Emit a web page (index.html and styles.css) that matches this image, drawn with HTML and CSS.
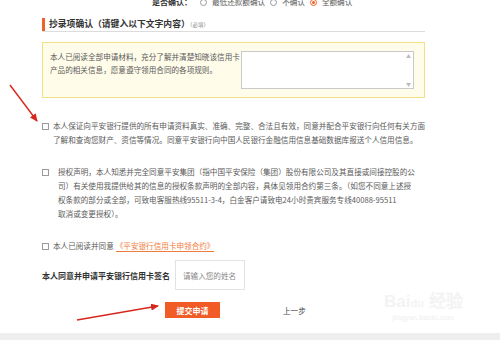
FILE: index.html
```html
<!DOCTYPE html>
<html lang="zh-CN">
<head>
<meta charset="utf-8">
<title>抄录项确认</title>
<link rel="stylesheet" href="styles.css">
</head>
<body>
<div class="page">
  <div class="confirm-row">
    <span class="confirm-label">是否确认：</span>
    <label class="radio"><span class="dot"></span>最低还款额确认</label>
    <label class="radio"><span class="dot"></span>不确认</label>
    <label class="radio"><span class="dot on"></span>全额确认</label>
  </div>

  <div class="section-head">
    <h2 class="section-title">抄录项确认（请键入以下文字内容）<small>（必填）</small></h2>
  </div>

  <div class="copy-box">
    <p class="copy-text">本人已阅读全部申请材料，充分了解并清楚知晓该信用卡<br>产品的相关信息，愿意遵守领用合同的各项规则。</p>
    <div class="textarea-wrap">
      <textarea class="copy-input"></textarea>
      <span class="scroll"><i>▲</i><i>▼</i></span>
    </div>
  </div>

  <div class="agree agree-first">
    <span class="check"></span>
    <p class="agree-text">本人保证向平安银行提供的所有申请资料真实、准确、完整、合法且有效，同意并配合平安银行向任何有关方面<br>了解和查询您财产、资信等情况。同意平安银行向中国人民银行金融信用信息基础数据库报送个人信用信息。</p>
  </div>

  <div class="agree">
    <span class="check"></span>
    <p class="agree-text indent">授权声明，本人知悉并完全同意平安集团（指中国平安保险（集团）股份有限公司及其直接或间接控股的公<br>司）有关使用我提供给其的信息的授权条款声明的全部内容，具体见领用合约第三条。（如您不同意上述授<br>权条款的部分或全部，可致电客服热线95511-3-4，白金客户请致电24小时贵宾服务专线40088-95511<br>取消或变更授权）。</p>
  </div>

  <div class="agree">
    <span class="check"></span>
    <p class="agree-text">本人已阅读并同意<a class="contract">《平安银行信用卡申领合约》</a></p>
  </div>

  <div class="sign-row">
    <span class="sign-label">本人同意并申请平安银行信用卡签名</span>
    <input class="sign-input" type="text" placeholder="请输入您的姓名">
  </div>

  <div class="actions">
    <button class="submit" type="button">提交申请</button>
    <a class="prev">上一步</a>
  </div>
</div>
<div class="footer"></div>

<div class="watermark">
  <span class="wm-logo">Bai<b>du</b> 经验</span>
  <span class="wm-url">jingyan.baidu.com</span>
</div>

<svg class="annot" width="500" height="340" viewBox="0 0 500 340">
  <defs>
    <marker id="ah" markerUnits="userSpaceOnUse" markerWidth="8" markerHeight="7" refX="7" refY="3.5" orient="auto">
      <path d="M0,0 L8,3.5 L0,7 z" fill="#d8261c"/>
    </marker>
  </defs>
  <line x1="10" y1="85" x2="37" y2="121" stroke="#d8261c" stroke-width="1.4" marker-end="url(#ah)"/>
  <line x1="77" y1="320" x2="158" y2="306" stroke="#d8261c" stroke-width="1.4" marker-end="url(#ah)"/>
</svg>
</body>
</html>
```

FILE: styles.css
```css
* { box-sizing: border-box; }

html, body {
  margin: 0;
  padding: 0;
}

body {
  width: 500px;
  height: 340px;
  overflow: hidden;
  background: #fff;
  position: relative;
  font-family: "Noto Sans CJK SC", "Noto Sans", sans-serif;
  color: #5a5a5a;
  font-size: 7.6px;
}

.page {
  padding-left: 42px;
  width: 440px;
}

/* top radio row (clipped) */
.confirm-row {
  display: flex;
  align-items: center;
  height: 12px;
  margin-top: -4px;
  padding-left: 110px;
  font-size: 7.6px;
  line-height: 12px;
}
.confirm-label {
  font-weight: bold;
  color: #333;
  font-size: 8px;
  margin-right: 8px;
}
.radio {
  display: flex;
  align-items: center;
  margin-right: 5px;
}
.dot {
  width: 7px;
  height: 7px;
  border: 1px solid #999;
  border-radius: 50%;
  margin-right: 5px;
  background: #fff;
  position: relative;
}
.dot.on {
  border-color: #f0622a;
}
.dot.on::after {
  content: "";
  position: absolute;
  left: 1px;
  top: 1px;
  width: 3px;
  height: 3px;
  border-radius: 50%;
  background: #f0622a;
}

/* section heading */
.section-head {
  margin-top: 10px;
  width: 383px;
  border-bottom: 1px solid #dcdcdc;
}
.section-title {
  margin: 0;
  border-left: 3px solid #f0622a;
  padding-left: 4px;
  font-size: 8.8px;
  line-height: 12px;
  font-weight: bold;
  color: #333;
}
.section-title small {
  font-size: 5.5px;
  font-weight: normal;
  color: #888;
}

/* yellow copy box */
.copy-box {
  margin-top: 10px;
  width: 383px;
  display: flex;
  align-items: flex-start;
  justify-content: space-between;
  background: #fffcea;
  border: 1px solid #f3df86;
  padding: 8px 10px 8px 7px;
}
.copy-text {
  margin: -1px 0 0;
  line-height: 13px;
  white-space: nowrap;
}
.textarea-wrap {
  position: relative;
  width: 173px;
  height: 38px;
  border: 1px solid #c9c9c9;
  background: #fff;
}
.copy-input {
  display: block;
  width: 100%;
  height: 100%;
  border: none;
  resize: none;
  background: transparent;
  padding: 0;
  outline: none;
}
.scroll {
  position: absolute;
  right: 1px;
  top: 1px;
  bottom: 1px;
  width: 7px;
  display: flex;
  flex-direction: column;
  justify-content: space-between;
  align-items: center;
}
.scroll i {
  font-style: normal;
  font-size: 5px;
  line-height: 6px;
  color: #bbb;
}

/* agreement rows */
.agree {
  display: flex;
  align-items: flex-start;
  margin-top: 18px;
}
.agree-first {
  margin-top: 21px;
}
.check {
  flex: none;
  width: 7px;
  height: 7px;
  border: 1px solid #9a9a9a;
  background: #fff;
  margin-top: 4px;
  margin-right: 4px;
}
.agree-text {
  margin: 0;
  line-height: 14px;
  white-space: nowrap;
}
.agree-text.indent {
  padding-left: 5px;
}
.contract {
  color: #f07c3c;
  border-bottom: 1px solid #f07c3c;
  margin-left: 2px;
}

/* signature */
.sign-row {
  display: flex;
  align-items: center;
  margin-top: 7px;
}
.sign-label {
  font-weight: bold;
  font-size: 8px;
  color: #333;
}
.sign-input {
  margin-left: 5px;
  width: 70px;
  height: 30px;
  border: 1px solid #e3e3e3;
  padding: 0 0 0 7px;
  font-family: inherit;
  font-size: 7.6px;
  color: #555;
  outline: none;
}
.sign-input::placeholder {
  color: #888;
}

/* actions */
.actions {
  display: flex;
  align-items: center;
  margin-top: 12px;
}
.submit {
  margin-left: 123px;
  width: 55px;
  height: 16px;
  border: none;
  padding: 0;
  background: #f15b26;
  color: #fff;
  font-family: inherit;
  font-size: 8px;
  font-weight: bold;
}
.prev {
  margin-left: 63px;
  color: #444;
  font-size: 7.6px;
}

.footer {
  margin-top: 15px;
  height: 20px;
  background: #eeeeee;
}

/* overlays */
.watermark {
  position: absolute;
  left: 384px;
  top: 292px;
  display: flex;
  flex-direction: column;
  align-items: center;
  color: #f3f3f3;
  pointer-events: none;
}
.wm-logo {
  font-family: "Liberation Sans", sans-serif;
  font-size: 17px;
  line-height: 20px;
  font-weight: bold;
}
.wm-logo b {
  font-size: 11px;
}
.wm-url {
  font-family: "Liberation Sans", sans-serif;
  font-size: 7px;
  line-height: 10px;
  font-weight: bold;
}

.annot {
  position: absolute;
  left: 0;
  top: 0;
  pointer-events: none;
}
```
